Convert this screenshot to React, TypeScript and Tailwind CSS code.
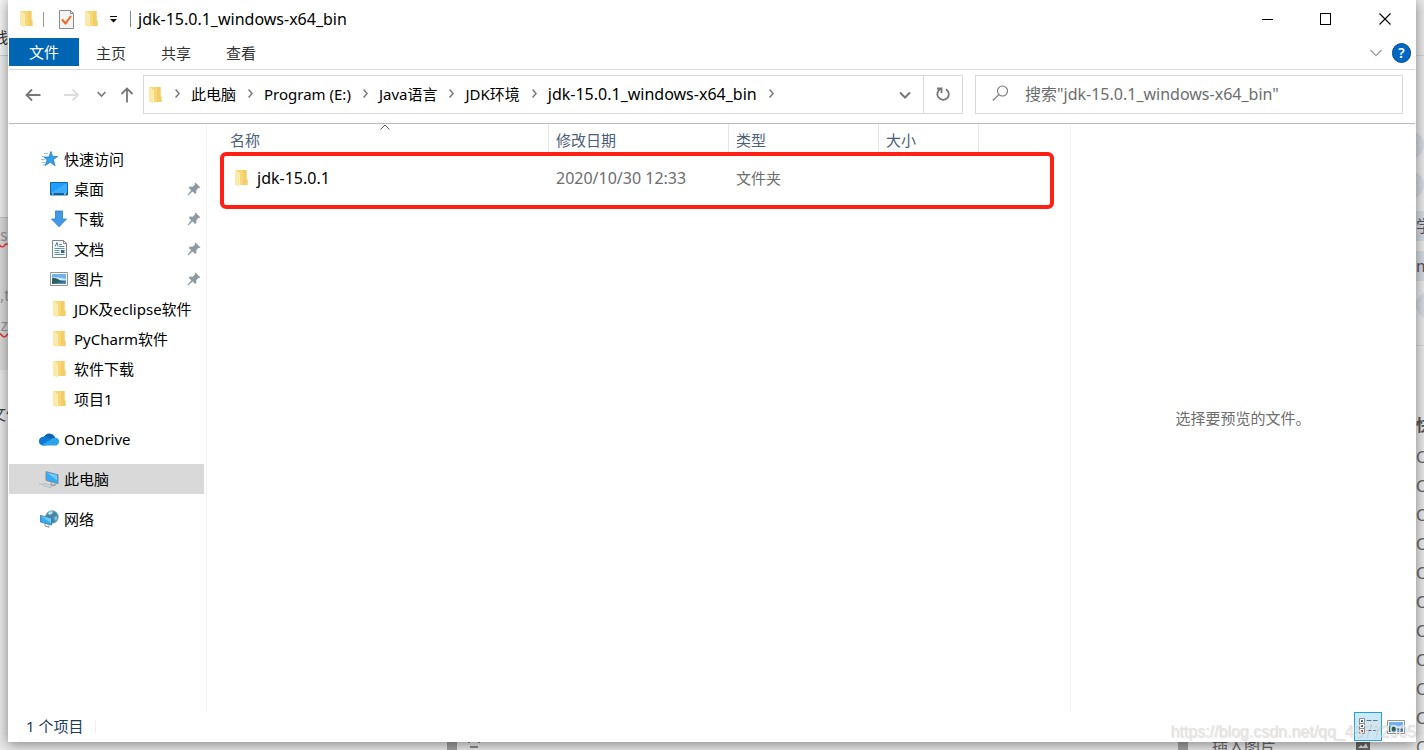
import type { ReactNode } from 'react';

const quickAccess = [
  { label: '桌面', icon: <DesktopIcon />, pinned: true },
  { label: '下载', icon: <DownloadIcon />, pinned: true },
  { label: '文档', icon: <DocumentIcon />, pinned: true },
  { label: '图片', icon: <PictureIcon />, pinned: true },
  { label: 'JDK及eclipse软件', icon: <FolderIcon />, pinned: false },
  { label: 'PyCharm软件', icon: <FolderIcon />, pinned: false },
  { label: '软件下载', icon: <FolderIcon />, pinned: false },
  { label: '项目1', icon: <FolderIcon />, pinned: false },
];

const parents = ['此电脑', 'Program (E:)', 'Java语言', 'JDK环境'];
const current = 'jdk-15.0.1_windows-x64_bin';

const columns = [
  { label: '名称', width: 'w-[327px] pl-2', sorted: true },
  { label: '修改日期', width: 'w-[180px] pl-[7px]', sorted: false },
  { label: '类型', width: 'w-[150px] pl-[7px]', sorted: false },
  { label: '大小', width: 'w-[100px] pl-[7px]', sorted: false },
];

function FolderIcon() {
  return (
    <svg width="13" height="18" viewBox="0 0 13 18" aria-hidden="true" className="shrink-0">
      <path d="M1 1h10.500v9.500h1V16H4z" fill="#f8d775" />
      <path d="M8 1h3.500v9.500h1V16H8z" fill="#f3cd69" />
      <path d="M0 1h1.500L4.500 4v13.500L0 15.500z" fill="#fde9a9" />
      <path d="M4.500 4v13.500" stroke="#fff3cc" strokeWidth="0.800" />
    </svg>
  );
}

function CheckedDocIcon() {
  return (
    <svg width="15" height="19" viewBox="0 0 15 19" fill="none" aria-hidden="true">
      <path d="M.5.5h11l3 3v15H.5z" fill="#f4f4f4" stroke="#8b8b8b" />
      <path d="M11.500.5v3h3" stroke="#8b8b8b" />
      <path d="M3 9.500l3.500 4L12 6" stroke="#f0641e" strokeWidth="2" />
    </svg>
  );
}

function StarIcon() {
  return (
    <svg width="18" height="18" viewBox="0 0 18 18" aria-hidden="true">
      <path d="M11 1.500l1.500 5H17.500l-4.200 3.200 1.800 6-4.900-3.500-5 3.300 2-5.600L4 7h4.900z" fill="#35a0ea" stroke="#1e7cc0" strokeWidth="0.8" />
      <path d="M4 3.500h4M2 6.500h2.500M1 9.500h4M2 12.500h3M3 15h2" stroke="#8cc8ee" />
    </svg>
  );
}

function DesktopIcon() {
  return (
    <svg width="18" height="14" viewBox="0 0 18 14" aria-hidden="true">
      <path d="M.5.5h17v12.500H.5z" fill="#1f9dfb" stroke="#0f66ac" />
      <path d="M1 11L17 1v10z" fill="#3dacfd" />
      <path d="M1 12h16" stroke="#134f80" strokeWidth="1.500" />
      <path d="M2 12h1.500M14 12h2" stroke="#e8f4ff" />
    </svg>
  );
}

function DownloadIcon() {
  return (
    <svg width="18" height="18" viewBox="0 0 18 18" aria-hidden="true">
      <path d="M5.500 1h7v8h4L9 16.800 1.500 9h4z" fill="#3f9bea" stroke="#2b7cc7" strokeWidth="0.8" />
    </svg>
  );
}

function DocumentIcon() {
  return (
    <svg width="15" height="18" viewBox="0 0 15 18" fill="none" aria-hidden="true">
      <path d="M.5.5h11l3 3v14H.5z" fill="#fbfbfb" stroke="#7f8588" />
      <path d="M11.500.5v3h3" stroke="#7f8588" />
      <path d="M3 6.500l2-4 1 4" stroke="#3d7fb5" />
      <path d="M7 4.500h3M7 6.500h5M2.500 8.500h10M2.500 10.500h5M2.500 12.500h5M2.500 14.500h10" stroke="#5b8fb0" />
      <path d="M9 10h3.500v3H9z" fill="#35648a" />
    </svg>
  );
}

function PictureIcon() {
  return (
    <svg width="18" height="14" viewBox="0 0 18 14" aria-hidden="true">
      <path d="M.5.5h17v13H.5z" fill="#fff" stroke="#8f9598" />
      <path d="M2 2h14v10H2z" fill="#6fb0f0" />
      <path d="M2 6c4-2 8 0 14 1v1H2z" fill="#d7ebf8" />
      <path d="M2 6.500c3-1 6 0 8 2l6 1V12H2z" fill="#2f6158" />
      <path d="M8 10.500l8-1V12H2z" fill="#4a85ae" />
    </svg>
  );
}

function PinIcon() {
  return (
    <svg width="14" height="14" viewBox="0 0 14 14" aria-hidden="true">
      <path d="M8.500.5l5 5-1.200.6-.8-.3-2.300 2.600.2 2.700-1.300 1L5.600 9.600 1.200 13.400.5 12.800 4.300 8.300 1.800 5.900l1-1.300 2.800.2 2.500-2.300-.4-1z" fill="#8e9aa3" />
    </svg>
  );
}

function CloudIcon() {
  return (
    <svg width="20" height="14" viewBox="0 0 20 14" aria-hidden="true">
      <path d="M5 5a6 6 0 0 1 10.500-.8L17 7 8 8z" fill="#0f62b4" />
      <path d="M4.500 13.500A4.300 4.300 0 0 1 4 4.800c2-.8 4 0 5.500 1L15 9l-8 4.500z" fill="#0c79d4" />
      <path d="M4 13.500h12a3.900 3.900 0 0 0 .3-7.800c-2-.3-3.300.7-4.300 1.600L3 12.800z" fill="#2aa5eb" />
    </svg>
  );
}

function ComputerIcon() {
  return (
    <svg width="20" height="17" viewBox="0 0 20 17" fill="none" aria-hidden="true">
      <path d="M7 .7l12 3v9L7 9.300z" fill="#35aaf8" stroke="#6e8796" strokeWidth="0.9" />
      <path d="M7.500 1.500L18 9.500V4z" fill="#70c8fc" />
      <path d="M0 12.500l4 1 2-1 8 2.500 3-1.500M4 14.500l7 2 3-1.500" stroke="#b4babe" />
      <path d="M12 11.500v2l4 1v-2" stroke="#8a9499" />
    </svg>
  );
}

function NetworkIcon() {
  return (
    <svg width="19" height="18" viewBox="0 0 19 18" fill="none" aria-hidden="true">
      <circle cx="12" cy="7" r="6.300" fill="#4488a8" stroke="#7ba6ba" strokeWidth="0.8" />
      <path d="M8 3c2-2 4-2 5-1l-1 2-3 1z" fill="#b6dfe8" />
      <path d="M14 7l3-1c1 2 0 4-2 5z" fill="#7fc0d6" />
      <path d="M.5 5.500l11 2.500v7L.5 12z" fill="#37abf5" stroke="#427e9e" strokeWidth="0.9" />
      <path d="M1 6l10 7V8.500z" fill="#72c9fb" />
      <path d="M5 14v2l4 1.300v-2" stroke="#8a9499" />
    </svg>
  );
}

function Arrow({ d }: { d: string }) {
  return (
    <svg width="16" height="16" viewBox="0 0 16 16" fill="none" stroke="currentColor" strokeWidth="1.800" aria-hidden="true">
      <path d={d} />
    </svg>
  );
}

function CrumbChevron() {
  return (
    <svg width="5" height="9" viewBox="0 0 5 9" fill="none" aria-hidden="true" className="shrink-0">
      <path d="M.6.6l3.500 3.900L.6 8.400" stroke="#777" strokeWidth="1.500" />
    </svg>
  );
}

function TitleBar() {
  return (
    <header className="flex h-[38px] items-center pl-[11px]">
      <FolderIcon />
      <span className="ml-2.5 h-[15px] w-px bg-[#999]" />
      <button aria-label="属性" className="ml-[15px]"><CheckedDocIcon /></button>
      <button aria-label="新建文件夹" className="ml-[11px]"><FolderIcon /></button>
      <button aria-label="自定义快速访问工具栏" className="ml-3">
        <svg width="7" height="7" viewBox="0 0 7 7" aria-hidden="true">
          <path d="M0 0h7v1H0zM0 3h7L3.500 6.500z" fill="#111" />
        </svg>
      </button>
      <span className="ml-[13px] h-4 w-px bg-[#888]" />
      <h1 className="ml-[7px] flex-1 text-base leading-5 whitespace-nowrap">{current}</h1>
      <div className="flex h-full pr-px">
        <button aria-label="最小化" className="flex w-[58px] items-center justify-center">
          <span className="h-px w-[11px] bg-black" />
        </button>
        <button aria-label="最大化" className="flex w-[59px] items-center justify-center">
          <span className="h-3 w-[11px] border border-black" />
        </button>
        <button aria-label="关闭" className="flex w-[59px] items-center justify-center">
          <svg width="12" height="12" viewBox="0 0 12 12" aria-hidden="true">
            <path d="M.5.5l11 11M11.500.5l-11 11" stroke="#000" strokeWidth="1.100" />
          </svg>
        </button>
      </div>
    </header>
  );
}

function Ribbon() {
  return (
    <nav className="flex h-8 items-start border-b border-[#dadbdc]">
      <button className="h-7 w-[70px] bg-[#0066b4] text-white">文件</button>
      {['主页', '共享', '查看'].map((tab) => (
        <button key={tab} className="h-[30px] w-[65px] pr-px text-[#333]">{tab}</button>
      ))}
      <div className="ml-auto flex h-[30px] items-center gap-2.5 pr-1">
        <button aria-label="展开功能区">
          <svg width="12" height="8" viewBox="0 0 12 8" fill="none" aria-hidden="true">
            <path d="M.5 1L6 6.700 11.500 1" stroke="#999" strokeWidth="1.200" />
          </svg>
        </button>
        <button aria-label="帮助" className="flex h-5 w-[19px] items-center justify-center rounded-full border border-[#0a4a85] bg-[#0067c5] text-sm leading-none font-semibold text-white">?</button>
      </div>
    </nav>
  );
}

function AddressRow() {
  return (
    <div className="flex h-[54px] items-start border-b border-[#bbb] pt-[5px] pr-3">
      <div className="flex h-[39px] w-[134px] shrink-0 items-center pl-4">
        <button aria-label="后退" className="text-[#777]"><Arrow d="M15.500 8H1.500M7 2.500L1.500 8 7 13.500" /></button>
        <button aria-label="前进" className="ml-[23px] text-[#dcdcdc]"><Arrow d="M0 8h14M8.500 2.500L14 8l-5.500 5.500" /></button>
        <button aria-label="最近浏览的位置" className="ml-[17px] text-[#777]">
          <svg width="9" height="7" viewBox="0 0 9 7" fill="none" aria-hidden="true">
            <path d="M.6 1l3.900 4 3.900-4" stroke="currentColor" strokeWidth="1.600" />
          </svg>
        </button>
        <button aria-label="上移" className="ml-[13px] text-[#777]"><Arrow d="M8 15.500V1.500M2.500 7L8 1.500 13.500 7" /></button>
      </div>
      <div className="flex h-[39px] min-w-0 flex-1 items-center border border-[#d9d9d9] pl-[5px]">
        <FolderIcon />
        <ol className="flex min-w-0 flex-1 items-center gap-3 pb-0.5 pl-[13px] whitespace-nowrap">
          {parents.map((crumb) => (
            <li key={crumb} className="flex items-center gap-[11px]">
              <CrumbChevron />
              <button>{crumb}</button>
            </li>
          ))}
          <li className="flex items-center gap-[11px] text-base leading-5">
            <CrumbChevron />
            <button>{current}</button>
          </li>
          <li><CrumbChevron /></li>
        </ol>
        <button aria-label="以前的位置" className="px-3">
          <svg width="12" height="8" viewBox="0 0 12 8" fill="none" aria-hidden="true">
            <path d="M1 1.500l5 5 5-5" stroke="#777" strokeWidth="2" />
          </svg>
        </button>
        <button aria-label="刷新" className="flex h-full w-[39px] items-center justify-center border-l border-[#d9d9d9]">
          <svg width="14" height="15" viewBox="0 0 14 15" fill="none" stroke="#777" strokeWidth="1.800" aria-hidden="true">
            <path d="M10 2.200A5.700 5.700 0 1 1 4.500 2M1 1.500h4.500V6" />
          </svg>
        </button>
      </div>
      <label className="ml-3 flex h-[39px] w-[428px] items-center gap-4 border border-[#d9d9d9] pb-0.5 pl-4">
        <svg width="17" height="17" viewBox="0 0 17 17" fill="none" stroke="#777" strokeWidth="1.100" aria-hidden="true">
          <circle cx="10.500" cy="6" r="5" />
          <path d="M6.800 9.700L.8 15.500" />
        </svg>
        <input aria-label="搜索" placeholder={`搜索"${current}"`} className="min-w-0 flex-1 text-base leading-5 outline-none placeholder:text-[#6d6d6d]" />
      </label>
    </div>
  );
}

function TreeItem({ icon, label, nested, pinned, selected }: { icon: ReactNode; label: string; nested?: boolean; pinned?: boolean; selected?: boolean }) {
  return (
    <a href="#" className={`mr-0.5 flex h-[30px] items-center pr-[3px] whitespace-nowrap ${nested ? 'pl-[41px]' : 'pl-[30px]'} ${selected ? 'bg-[#d9d9d9]' : ''}`}>
      <span className={`flex shrink-0 justify-center ${nested ? 'w-[18px]' : 'w-5'}`}>{icon}</span>
      <span className={nested ? 'ml-1.5' : 'ml-[5px]'}>{label}</span>
      {pinned && <span className="ml-auto"><PinIcon /></span>}
    </a>
  );
}

function Sidebar() {
  return (
    <aside className="flex w-[198px] shrink-0 flex-col gap-2.5 border-r border-[#f2f2f2] pt-5">
      <div>
        <TreeItem icon={<StarIcon />} label="快速访问" />
        {quickAccess.map((item) => (
          <TreeItem key={item.label} nested {...item} />
        ))}
      </div>
      <TreeItem icon={<CloudIcon />} label="OneDrive" />
      <TreeItem icon={<ComputerIcon />} label="此电脑" selected />
      <TreeItem icon={<NetworkIcon />} label="网络" />
    </aside>
  );
}

function FileList() {
  return (
    <main className="relative min-w-0 flex-1 pl-[15px]">
      <table className="table-fixed border-separate border-spacing-0 text-left whitespace-nowrap">
        <thead>
          <tr className="text-[#4c607a]">
            {columns.map((col) => (
              <th key={col.label} scope="col" className={`relative h-[30px] border-r border-[#e5e5e5] pt-0.5 font-normal ${col.width}`}>
                {col.label}
                {col.sorted && (
                  <svg width="10" height="6" viewBox="0 0 10 6" fill="none" aria-hidden="true" className="absolute top-0 left-1/2 -translate-x-1/2">
                    <path d="M.5 5.500L5 1l4.500 4.500" stroke="#555" />
                  </svg>
                )}
              </th>
            ))}
          </tr>
        </thead>
        <tbody>
          <tr className="text-[#6d6d6d]">
            <td className="h-12 pl-[13px] text-base leading-5 text-black">
              <span className="flex items-center gap-[9px]"><FolderIcon />jdk-15.0.1</span>
            </td>
            <td className="pl-[7px] text-base leading-5">2020/10/30 12:33</td>
            <td className="pl-[7px]">文件夹</td>
            <td />
          </tr>
        </tbody>
      </table>
      <div className="absolute top-7 right-4 left-[13px] h-[57px] rounded-md border-4 border-[#ff2015]" />
    </main>
  );
}

function StatusBar() {
  return (
    <footer className="flex h-[30px] items-start pl-[17px] text-[#1e3a5c]">
      <span className="pt-1">1 个项目</span>
      <span className="mt-2 ml-3 h-[13px] w-px bg-[#eee]" />
      <div className="ml-auto flex items-center gap-[5px] pr-2.5">
        <button aria-label="详细信息" className="flex h-[29px] w-7 items-center justify-center border border-[#26a0da] bg-[#cce8f6]">
          <svg width="19" height="17" viewBox="0 0 19 17" fill="none" aria-hidden="true">
            <path d="M.5.5h5v5h-5zM.5 5.500h5v5h-5zM.5 10.500h5v5h-5z" fill="#fff" stroke="#8b8f92" />
            <path d="M2 2h2v2H2z" fill="#3b77a8" />
            <path d="M2 7h2v2H2z" fill="#35507c" />
            <path d="M2 12h2v2H2z" fill="#c03a2b" />
            <path d="M7.500 2.500h5M14 2.500h4.500M7.500 7.500h5M14 7.500h4.500M7.500 12.500h5M14 12.500h4.500" stroke="#6c7478" />
          </svg>
        </button>
        <button aria-label="大缩略图"><PictureIcon /></button>
      </div>
    </footer>
  );
}

// The web page that shows around the edges of the explorer window.
function Backdrop() {
  return (
    <div aria-hidden="true" className="absolute inset-0 overflow-hidden bg-[#e9e9e9] text-base leading-6 text-[#666]">
      <div className="absolute top-0 left-0 h-[750px] w-2 overflow-hidden whitespace-nowrap">
        <div className="h-14 border-b border-[#ccc] bg-[#f4f4f4]" />
        <div className="h-[161px] bg-[#ededed]" />
        <div className="h-[153px] border-t border-[#c4c4c4] bg-[#d9d9d9]" />
        <span className="absolute top-[25px] right-0 text-[15px] text-[#333]">线</span>
        <span className="absolute top-[223px] left-0 text-[#999] underline decoration-[#e33] decoration-wavy">s</span>
        <span className="absolute top-[283px] left-0 text-[#999]">,t</span>
        <span className="absolute top-[313px] right-0 text-[#999] underline decoration-[#e33] decoration-wavy">zz</span>
        <span className="absolute top-[402px] -left-2.5 text-[#444]">文件</span>
      </div>
      <div className="absolute top-0 right-0 h-[750px] w-2 overflow-hidden whitespace-nowrap">
        <div className="h-14 border-b border-[#d0d0d0]" />
        <div className="absolute top-[131px] -left-5 size-7 rounded-full bg-[#d5dae1]" />
        <div className="absolute top-[171px] -left-5 size-7 rounded-full bg-[#d5dae1]" />
        <div className="absolute top-[211px] left-0 h-[30px] w-2 bg-[#d3d9e0] leading-[30px] text-[#556]">学</div>
        <div className="absolute top-[251px] left-0 h-[30px] w-2 bg-[#d3d9e0] leading-[30px] text-[#556]">m</div>
        <div className="absolute top-[291px] left-0 size-7 rounded-full bg-[#d5dae1]" />
        <div className="absolute top-[345px] left-0 h-px w-2 bg-[#d8d8d8]" />
        <div className="absolute top-[413px] left-0 font-bold text-[#555]">快</div>
        <div className="absolute top-[443px] left-0 leading-[29px]">
          {Array.from({ length: 11 }, (_, i) => <div key={i}>C</div>)}
        </div>
      </div>
      <div className="absolute bottom-0 left-0 h-2 w-full overflow-hidden">
        <div className="absolute left-[447px] h-2 w-2.5 bg-[#a0a0a0]" />
        <svg width="14" height="8" viewBox="0 0 14 8" fill="#888" className="absolute left-[467px]">
          <path d="M1 0h2v1H1zM11 0h2v1h-2zM3 4h8v2H3z" />
        </svg>
        <div className="absolute left-[1178px] h-2 w-2.5 bg-[#a0a0a0]" />
        <div className="absolute -top-2 left-[1212px]">插入图片</div>
        <svg width="14" height="8" viewBox="0 0 14 8" className="absolute left-[1356px]">
          <path d="M0 0h14v8H0z" fill="#666" />
          <path d="M2 6l3-3 2 2 3-4 2 5z" fill="#ddd" />
        </svg>
      </div>
    </div>
  );
}

export default function App() {
  return (
    <div className="relative isolate flex h-screen px-2 pb-2 font-['Noto_Sans','Noto_Sans_CJK_SC',sans-serif] text-[15px] leading-5 text-black">
      <Backdrop />
      <div className="relative flex min-w-0 flex-1 flex-col bg-white px-px shadow-[0_2px_12px_rgba(0,0,0,0.45)]">
        <TitleBar />
        <Ribbon />
        <AddressRow />
        <div className="flex min-h-0 flex-1">
          <Sidebar />
          <FileList />
          <section aria-label="预览" className="flex w-[345px] shrink-0 items-center justify-center border-l border-[#f2f2f2] text-[#6d6d6d]">
            选择要预览的文件。
          </section>
        </div>
        <StatusBar />
      </div>
      <p className="absolute right-2 bottom-1.5 font-['Liberation_Sans',sans-serif] text-base leading-6 text-[#e4e4e4] [text-shadow:1px_1px_1px_rgba(0,0,0,0.12)]">https://blog.csdn.net/qq_45772905</p>
    </div>
  );
}
